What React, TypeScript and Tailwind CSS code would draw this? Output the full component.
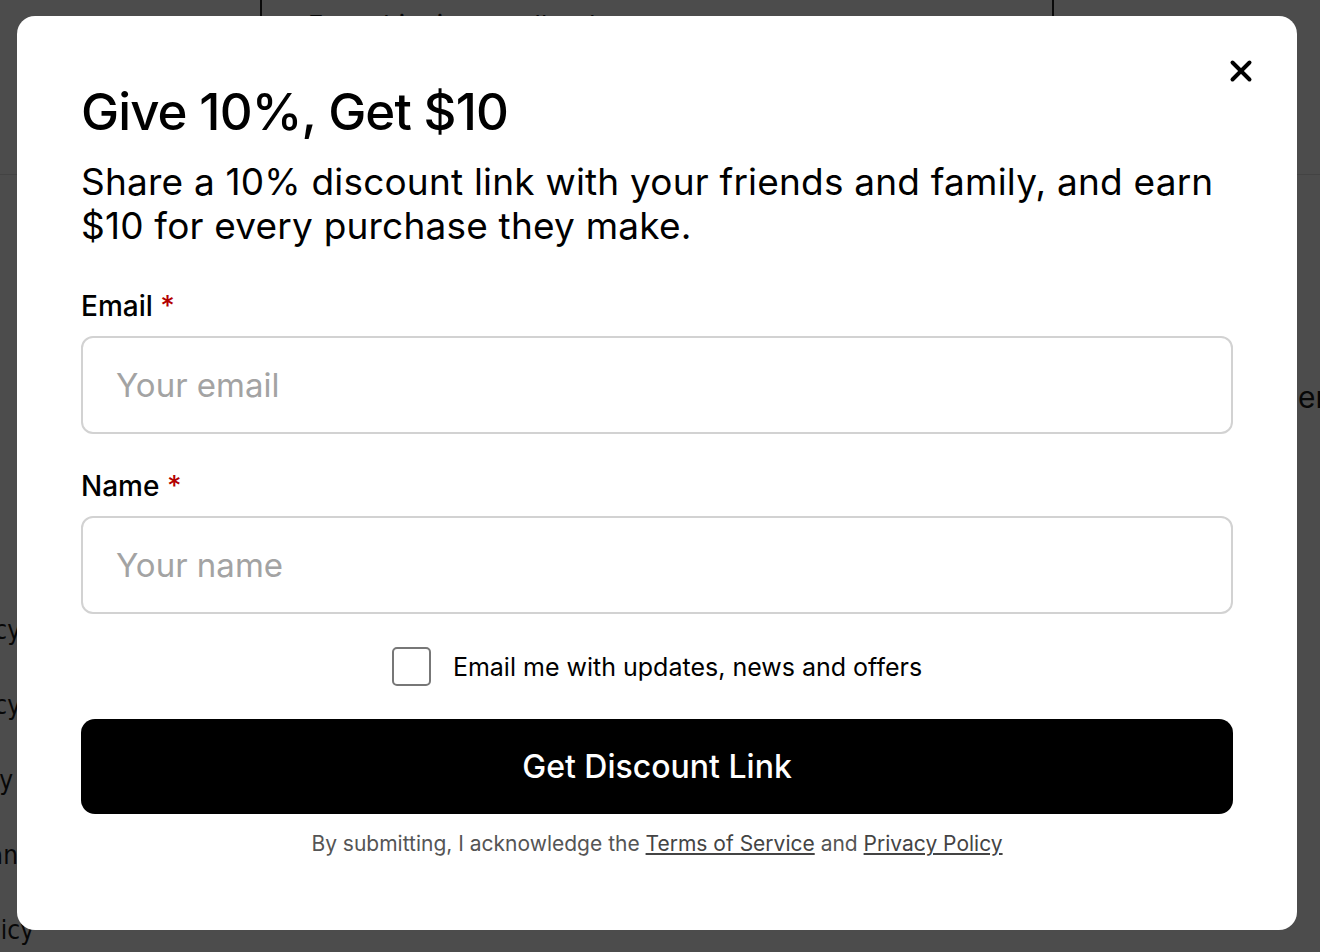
import { X } from "lucide-react";

// Links of the page behind the overlay; only their ends peek out at the left edge
const footerLinks = [
  { text: "Privacy Policy", box: "w-[21px]" },
  { text: "Refund Policy", box: "w-[21px]" },
  { text: "Accessibility", box: "w-[13px]" },
  { text: "Cancellation Policy", box: "w-[192px]" },
  { text: "Shipping Policy", box: "w-[34px]" },
];

function BackgroundPage() {
  return (
    <div className="flex h-full flex-col text-[#1a1a1a]">
      <div className="flex h-[175px] shrink-0 border-b border-[#e2e2e2]">
        <div className="w-[262px] border-r-2 border-[#222]" />
        <div className="flex-1 border-r-2 border-[#222] pl-[46px] pt-[5px] text-[26px]">Free shipping on all orders</div>
        <div className="w-[266px]" />
      </div>
      <div className="flex flex-1">
        <div className="flex w-[40px] flex-col overflow-hidden pt-[436px] font-['DejaVu_Sans_Condensed',Roboto,sans-serif] text-[26px]">
          {footerLinks.map((l) => (
            <div key={l.text} className={`flex h-[75px] justify-end whitespace-nowrap ${l.box}`}>
              {l.text}
            </div>
          ))}
        </div>
        <div className="flex-1" />
        <div className="w-[22px] overflow-hidden pt-[200px] text-[30px]">
          <span className="whitespace-nowrap">ers</span>
        </div>
      </div>
    </div>
  );
}

function Field({ label, placeholder, type, className }: { label: string; placeholder: string; type: string; className: string }) {
  return (
    <div className={`flex flex-col ${className}`}>
      <label className="text-[28px] font-medium leading-[32px] text-black">
        {label} <span className="text-[#b30000]">*</span>
      </label>
      <input
        type={type}
        placeholder={placeholder}
        className="mt-[14px] h-[98px] w-full rounded-[12px] border-2 border-[#d2d2d2] bg-white px-[33px] text-[33px] text-black outline-none placeholder:text-[#a3a3a3]"
      />
    </div>
  );
}

export default function App() {
  return (
    <div className="relative h-[952px] w-[1320px] overflow-hidden bg-white font-[Inter,'Noto_Sans',sans-serif]">
      <BackgroundPage />

      {/* Modal overlay */}
      <div className="absolute inset-0 bg-black/70 pl-[17px] pt-[16px]">
        <div className="relative h-[914px] w-[1280px] rounded-[18px] bg-white px-16 pt-[66px]">
          <button className="absolute right-[36px] top-[35px] flex h-10 w-10 items-center justify-center text-black">
            <X className="h-[34px] w-[34px]" strokeWidth={2.8} />
          </button>

          <h2 className="text-[51px] font-medium leading-[60px] tracking-[-0.9px] text-black">Give 10%, Get $10</h2>
          <p className="mt-[18px] text-[37px] leading-[44px] tracking-[0.2px] text-black">
            Share a 10% discount link with your friends and family, and earn $10 for every purchase they make.
          </p>

          <form className="mt-[42px] flex flex-col">
            <Field label="Email" placeholder="Your email" type="email" className="" />
            <Field label="Name" placeholder="Your name" type="text" className="mt-[36px]" />

            <label className="mt-[33px] flex items-center justify-center gap-[22px]">
              <span className="h-[39px] w-[39px] rounded-[5px] border-2 border-[#777]" />
              <span className="text-[25px] leading-[30px] text-black">Email me with updates, news and offers</span>
            </label>

            <button
              type="button"
              className="mt-[33px] h-[95px] w-full rounded-[14px] bg-black text-[32px] font-medium text-white"
            >
              Get Discount Link
            </button>

            <p className="mt-[16px] text-center text-[21px] leading-[28px] text-[#555]">
              By submitting, I acknowledge the{" "}
              <a className="text-[#444] underline underline-offset-2">Terms of Service</a> and{" "}
              <a className="text-[#444] underline underline-offset-2">Privacy Policy</a>
            </p>
          </form>
        </div>
      </div>
    </div>
  );
}
